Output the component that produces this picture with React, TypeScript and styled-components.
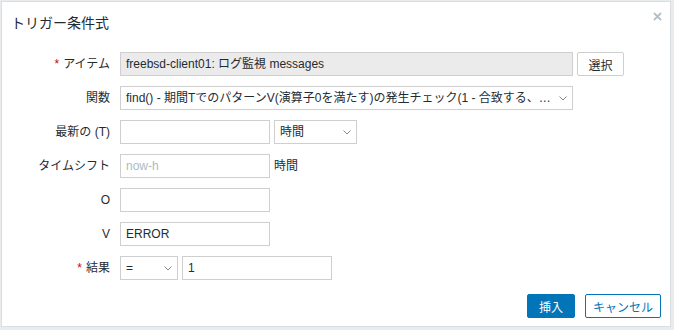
import * as React from "react";
import styled, { createGlobalStyle } from "styled-components";

const GlobalStyle = createGlobalStyle`
  html, body {
    margin: 0;
    padding: 0;
    background: #e9ecee;
  }
  body {
    font-family: "Liberation Sans", "Noto Sans CJK JP", sans-serif;
    font-size: 12px;
    color: #1f2c33;
  }
`;

const Dialog = styled.div`
  position: relative;
  box-sizing: border-box;
  width: 670px;
  height: 326px;
  margin: 1px 0 0 1px;
  background: #ffffff;
  border: 1px solid #d8dee1;
  display: flex;
  flex-direction: column;
`;

const Title = styled.h4`
  margin: 0;
  padding: 12px 0 0 9px;
  height: 38px;
  box-sizing: border-box;
  font-size: 14px;
  font-weight: normal;
  line-height: 18px;
`;

const Close = styled.button`
  position: absolute;
  top: 8px;
  right: 7px;
  width: 12px;
  height: 12px;
  padding: 0;
  border: 0;
  background: none;
  display: flex;
  align-items: center;
  justify-content: center;
`;

const Form = styled.div`
  display: grid;
  grid-template-columns: 108px auto;
  column-gap: 10px;
  row-gap: 10px;
  padding-top: 12px;
  align-items: center;
`;

const Label = styled.label`
  text-align: right;
  line-height: 24px;
  white-space: nowrap;
`;

const Required = styled.span`
  color: #d40000;
  margin-right: 4px;
`;

const Field = styled.div`
  display: flex;
  align-items: center;
  gap: 4px;
  height: 24px;
`;

const TextBox = styled.div<{ $w: number; $readonly?: boolean; $muted?: boolean }>`
  box-sizing: border-box;
  width: ${(p) => p.$w}px;
  height: 24px;
  border: 1px solid #cfcfcf;
  background: ${(p) => (p.$readonly ? "#ebebeb" : "#ffffff")};
  color: ${(p) => (p.$muted ? "#acbbc2" : "#1f2c33")};
  padding: 0 5px;
  line-height: 22px;
  white-space: nowrap;
  overflow: hidden;
`;

const Select = styled.div<{ $w: number }>`
  box-sizing: border-box;
  width: ${(p) => p.$w}px;
  height: 24px;
  border: 1px solid #cfcfcf;
  background: #ffffff;
  padding: 0 19px 0 5px;
  line-height: 22px;
  position: relative;
  white-space: nowrap;
  overflow: hidden;
  text-overflow: ellipsis;
`;

const Chevron = styled.svg`
  position: absolute;
  right: 5px;
  top: 9px;
`;

const Suffix = styled.span`
  line-height: 24px;
`;

const Button = styled.button<{ $primary?: boolean; $w: number }>`
  box-sizing: border-box;
  width: ${(p) => p.$w}px;
  height: 24px;
  padding: 0;
  font-family: inherit;
  font-size: 12px;
  border: 1px solid #0275b8;
  background: ${(p) => (p.$primary ? "#0275b8" : "#ffffff")};
  color: ${(p) => (p.$primary ? "#ffffff" : "#0275b8")};
  border-radius: 2px;
`;

const PickButton = styled.button`
  box-sizing: border-box;
  width: 47px;
  height: 24px;
  font-family: inherit;
  font-size: 12px;
  border: 1px solid #cfcfcf;
  background: #ffffff;
  color: #1f2c33;
  border-radius: 2px;
  padding: 0;
`;

const Footer = styled.div`
  margin-top: auto;
  display: flex;
  justify-content: flex-end;
  gap: 10px;
  padding: 0 9px 8px 0;
`;

function SelectBox({ w, children }: { w: number; children: React.ReactNode }) {
  return (
    <Select $w={w}>
      {children}
      <Chevron width="8" height="5" viewBox="0 0 8 5">
        <path d="M0.5 0.5 L4 4 L7.5 0.5" fill="none" stroke="#768d99" strokeWidth="1" />
      </Chevron>
    </Select>
  );
}

export default function App() {
  return (
    <>
      <GlobalStyle />
      <Dialog>
        <Title>トリガー条件式</Title>
        <Close aria-label="close">
          <svg width="9" height="9" viewBox="0 0 9 9">
            <path d="M1 1 L8 8 M8 1 L1 8" stroke="#b4c0c6" strokeWidth="1.8" />
          </svg>
        </Close>
        <Form>
          <Label>
            <Required>*</Required>アイテム
          </Label>
          <Field>
            <TextBox $w={453} $readonly>
              freebsd-client01: ログ監視 messages
            </TextBox>
            <PickButton>選択</PickButton>
          </Field>

          <Label>関数</Label>
          <Field>
            <SelectBox w={453}>
              find() - 期間TでのパターンV(演算子0を満たす)の発生チェック(1 - 合致する、0 - 合致しない)
            </SelectBox>
          </Field>

          <Label>最新の (T)</Label>
          <Field>
            <TextBox $w={150} />
            <SelectBox w={83}>時間</SelectBox>
          </Field>

          <Label>タイムシフト</Label>
          <Field>
            <TextBox $w={150} $muted>
              now-h
            </TextBox>
            <Suffix>時間</Suffix>
          </Field>

          <Label>O</Label>
          <Field>
            <TextBox $w={150} />
          </Field>

          <Label>V</Label>
          <Field>
            <TextBox $w={150}>ERROR</TextBox>
          </Field>

          <Label>
            <Required>*</Required>結果
          </Label>
          <Field>
            <SelectBox w={58}>=</SelectBox>
            <TextBox $w={150}>1</TextBox>
          </Field>
        </Form>
        <Footer>
          <Button $primary $w={48}>
            挿入
          </Button>
          <Button $w={76}>キャンセル</Button>
        </Footer>
      </Dialog>
    </>
  );
}
